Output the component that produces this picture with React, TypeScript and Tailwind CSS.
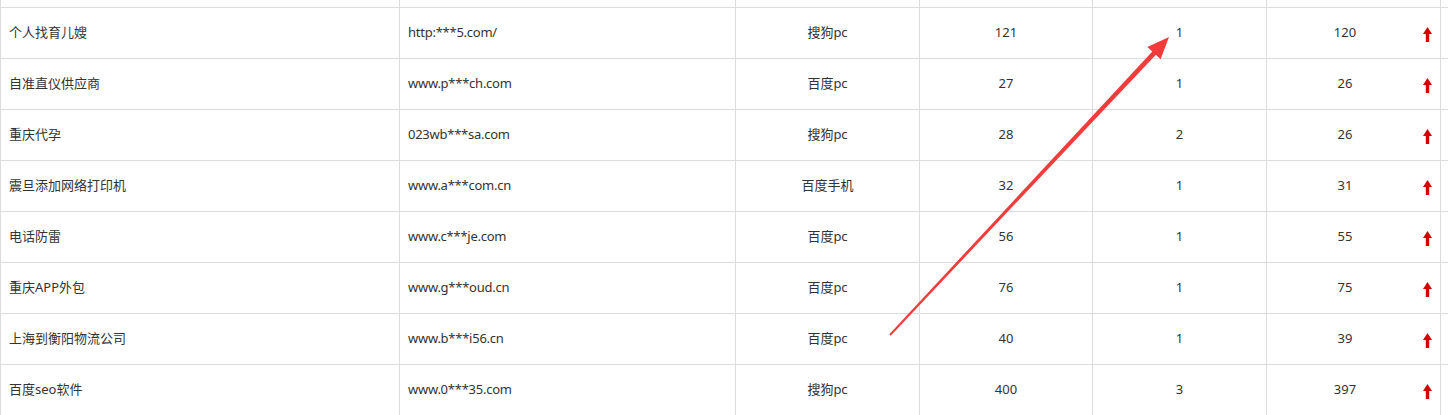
import React from "react";

const rows = [
  ["个人找育儿嫂", "http:***5.com/", "搜狗pc", "121", "1", "120"],
  ["自准直仪供应商", "www.p***ch.com", "百度pc", "27", "1", "26"],
  ["重庆代孕", "023wb***sa.com", "搜狗pc", "28", "2", "26"],
  ["震旦添加网络打印机", "www.a***com.cn", "百度手机", "32", "1", "31"],
  ["电话防雷", "www.c***je.com", "百度pc", "56", "1", "55"],
  ["重庆APP外包", "www.g***oud.cn", "百度pc", "76", "1", "75"],
  ["上海到衡阳物流公司", "www.b***i56.cn", "百度pc", "40", "1", "39"],
  ["百度seo软件", "www.0***35.com", "搜狗pc", "400", "3", "397"],
];

function UpArrow() {
  return (
    <svg width="9" height="15" viewBox="0 0 9 15" className="shrink-0">
      <polygon points="4.5,0 9,7 6.2,7 6.2,15 2.8,15 2.8,7 0,7" fill="#d40000" />
    </svg>
  );
}

function Row({ r }: { r: string[] }) {
  return (
    <div className="flex h-[51px] border-b border-[#dddddd]">
      <div className="w-[399px] shrink-0 border-l border-[#dddddd] pl-2 flex items-center">{r[0]}</div>
      <div className="w-[336px] shrink-0 border-l border-[#dddddd] pl-2 flex items-center tracking-[-0.25px]">{r[1]}</div>
      <div className="w-[184px] shrink-0 border-l border-[#dddddd] flex items-center justify-center">{r[2]}</div>
      <div className="w-[173px] shrink-0 border-l border-[#dddddd] flex items-center justify-center">{r[3]}</div>
      <div className="w-[174px] shrink-0 border-l border-[#dddddd] flex items-center justify-center">{r[4]}</div>
      <div className="w-[175px] shrink-0 border-l border-r border-[#dddddd] flex items-center">
        <div className="flex-1 text-center">{r[5]}</div>
        <div className="mr-[8px] pt-[3px]"><UpArrow /></div>
      </div>
    </div>
  );
}

export default function App() {
  return (
    <div
      className="relative w-[1448px] h-[415px] overflow-hidden bg-white text-[13px] text-[#333333]"
      style={{ fontFamily: '"Noto Sans", "Noto Sans CJK SC", sans-serif' }}
    >
      <div className="flex h-[8px] border-b border-[#dddddd]">
        <div className="w-[399px] shrink-0 border-l border-[#dddddd]" />
        <div className="w-[336px] shrink-0 border-l border-[#dddddd]" />
        <div className="w-[184px] shrink-0 border-l border-[#dddddd]" />
        <div className="w-[173px] shrink-0 border-l border-[#dddddd]" />
        <div className="w-[174px] shrink-0 border-l border-[#dddddd]" />
        <div className="w-[175px] shrink-0 border-l border-r border-[#dddddd]" />
      </div>
      {rows.map((r, i) => (
        <Row key={i} r={r} />
      ))}
      <svg className="absolute left-0 top-0 pointer-events-none" width="1448" height="415">
        <polygon
          points="890.7,335.7 889.3,334.3 1154.2,49.4 1157.8,52.8"
          fill="#f23b3b"
        />
        <polygon points="1169,37 1160.6,59.3 1147.4,46.9" fill="#f23b3b" />
      </svg>
    </div>
  );
}
